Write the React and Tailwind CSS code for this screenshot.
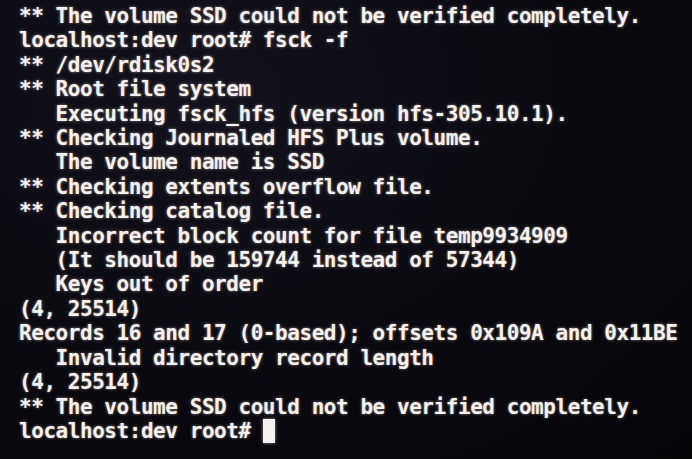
import React from "react"

const lines = [
  "** The volume SSD could not be verified completely.",
  "localhost:dev root# fsck -f",
  "** /dev/rdisk0s2",
  "** Root file system",
  "   Executing fsck_hfs (version hfs-305.10.1).",
  "** Checking Journaled HFS Plus volume.",
  "   The volume name is SSD",
  "** Checking extents overflow file.",
  "** Checking catalog file.",
  "   Incorrect block count for file temp9934909",
  "   (It should be 159744 instead of 57344)",
  "   Keys out of order",
  "(4, 25514)",
  "Records 16 and 17 (0-based); offsets 0x109A and 0x11BE",
  "   Invalid directory record length",
  "(4, 25514)",
  "** The volume SSD could not be verified completely.",
]

export default function App() {
  return (
    <div className="w-[692px] h-[459px] overflow-hidden bg-[#09090f] bg-[radial-gradient(ellipse_at_30%_20%,#13121c_0%,#09090f_60%,#050508_100%)]">
      <div className="pt-[4px] pl-[19px] font-['DejaVu_Sans_Mono','Liberation_Mono',monospace] font-bold text-[21px] tracking-[-0.45px] leading-[24.4px] text-[#f5f1ee] whitespace-pre [text-shadow:0_0_3px_rgba(255,240,230,0.55)]">
        {lines.map((line, i) => (
          <div key={i}>{line}</div>
        ))}
        <div className="flex items-center">
          <span>localhost:dev root# </span>
          <span className="inline-block w-[12px] h-[24px] bg-[#f5f1ee] shadow-[0_0_3px_rgba(255,240,230,0.6)]"></span>
        </div>
      </div>
    </div>
  )
}
